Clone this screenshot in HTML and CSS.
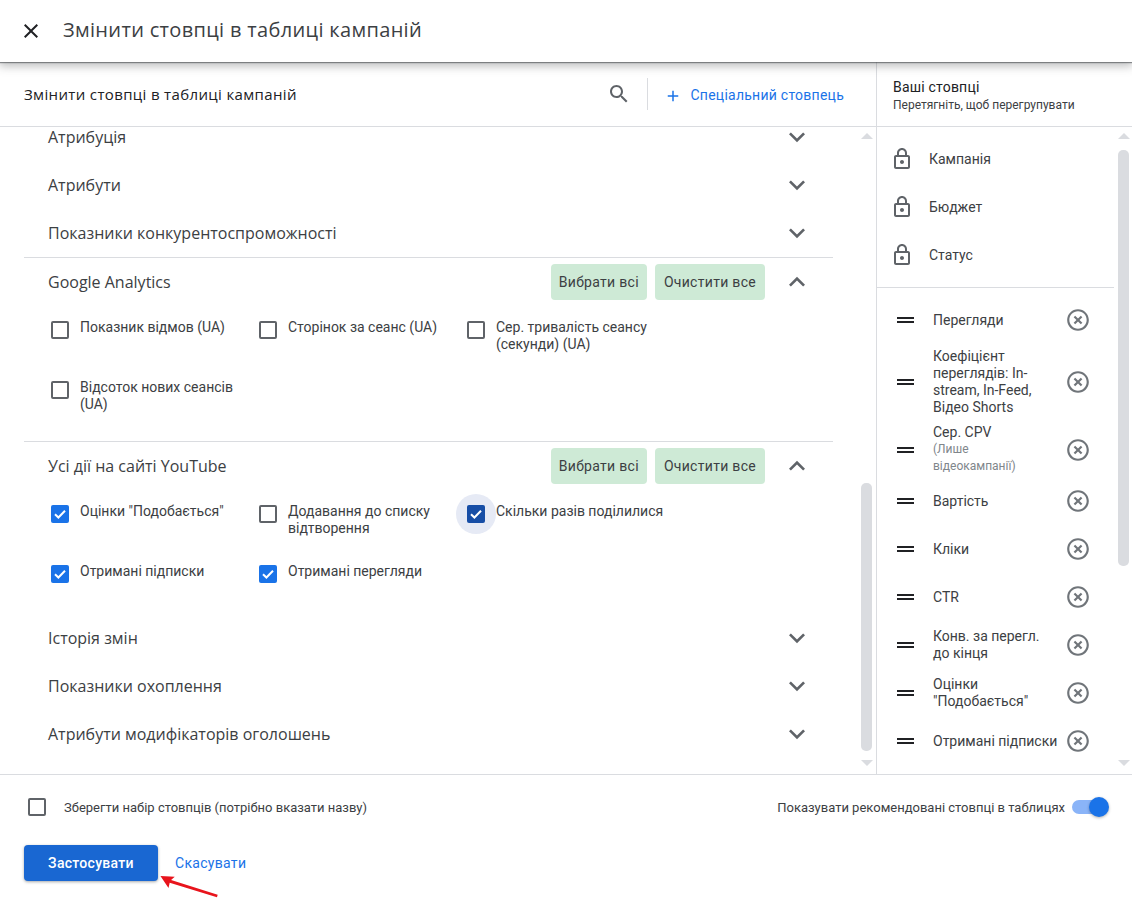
FILE: index.html
```html
<!DOCTYPE html>
<html lang="uk">
<head>
<meta charset="utf-8">
<title>Змінити стовпці в таблиці кампаній</title>
<link rel="stylesheet" href="styles.css">
</head>
<body>
<svg class="defs" width="0" height="0" aria-hidden="true">
  <symbol id="down" viewBox="3 3 18 18"><path d="M16.59 8.59L12 13.17 7.41 8.59 6 10l6 6 6-6z"/></symbol>
  <symbol id="up" viewBox="3 3 18 18"><path d="M12 8l-6 6 1.41 1.41L12 10.83l4.59 4.58L18 14z"/></symbol>
  <symbol id="lock" viewBox="0 0 24 24"><path d="M18 8h-1V6c0-2.76-2.24-5-5-5S7 3.24 7 6v2H6c-1.1 0-2 .9-2 2v10c0 1.1.9 2 2 2h12c1.1 0 2-.9 2-2V10c0-1.1-.9-2-2-2zM9 6c0-1.66 1.34-3 3-3s3 1.34 3 3v2H9V6zm9 14H6V10h12v10zm-6-3c1.1 0 2-.9 2-2s-.9-2-2-2-2 .9-2 2 .9 2 2 2z"/></symbol>
  <symbol id="remove" viewBox="0 0 24 24"><path d="M14.59 8L12 10.59 9.41 8 8 9.41 10.59 12 8 14.59 9.41 16 12 13.41 14.59 16 16 14.59 13.41 12 16 9.41 14.59 8zM12 2C6.47 2 2 6.47 2 12s4.47 10 10 10 10-4.47 10-10S17.53 2 12 2zm0 18c-4.41 0-8-3.59-8-8s3.59-8 8-8 8 3.59 8 8-3.59 8-8 8z"/></symbol>
  <symbol id="check" viewBox="0 0 18 18"><path d="M4 9.2l3.4 3.3L14 5.8" fill="none" stroke="#fff" stroke-width="2"/></symbol>
</svg>

<header class="topbar">
  <svg class="close" viewBox="0 0 24 24"><path d="M19 6.41L17.59 5 12 10.59 6.41 5 5 6.41 10.59 12 5 17.59 6.41 19 12 13.41 17.59 19 19 17.59 13.41 12z"/></svg>
  <h1 class="topbar-title">Змінити стовпці в таблиці кампаній</h1>
</header>

<main class="main">
  <section class="picker">
    <div class="picker-head">
      <h2 class="picker-title">Змінити стовпці в таблиці кампаній</h2>
      <svg class="search" viewBox="0 0 24 24"><path d="M15.5 14h-.79l-.28-.27C15.41 12.59 16 11.11 16 9.5 16 5.91 13.09 3 9.5 3S3 5.91 3 9.5 5.91 16 9.5 16c1.61 0 3.09-.59 4.23-1.57l.27.28v.79l5 4.99L20.49 19l-4.99-5zm-6 0C7.01 14 5 11.99 5 9.5S7.01 5 9.5 5 14 7.01 14 9.5 11.99 14 9.5 14z"/></svg>
      <span class="vline"></span>
      <a class="add-col"><svg class="plus" viewBox="0 0 24 24"><path d="M19 13h-6v6h-2v-6H5v-2h6V5h2v6h6v2z"/></svg>Спеціальний стовпець</a>
    </div>
    <div class="picker-body">
      <div class="groups">
        <div class="group-row"><span class="group-name">Атрибуція</span><svg class="chev"><use href="#down"/></svg></div>
        <div class="group-row"><span class="group-name">Атрибути</span><svg class="chev"><use href="#down"/></svg></div>
        <div class="group-row"><span class="group-name">Показники конкурентоспроможності</span><svg class="chev"><use href="#down"/></svg></div>

        <div class="group-open ga">
          <div class="group-row">
            <span class="group-name">Google Analytics</span>
            <button class="chip">Вибрати всі</button><button class="chip">Очистити все</button>
            <svg class="chev"><use href="#up"/></svg>
          </div>
          <div class="opts">
            <label class="opt"><span class="cb"></span><span>Показник відмов (UA)</span></label>
            <label class="opt"><span class="cb"></span><span>Сторінок за сеанс (UA)</span></label>
            <label class="opt"><span class="cb"></span><span>Сер. тривалість сеансу (секунди) (UA)</span></label>
            <label class="opt"><span class="cb"></span><span>Відсоток нових сеансів (UA)</span></label>
          </div>
        </div>

        <div class="group-open yt">
          <div class="group-row">
            <span class="group-name">Усі дії на сайті YouTube</span>
            <button class="chip">Вибрати всі</button><button class="chip">Очистити все</button>
            <svg class="chev"><use href="#up"/></svg>
          </div>
          <div class="opts">
            <label class="opt"><span class="cb on"><svg><use href="#check"/></svg></span><span>Оцінки "Подобається"</span></label>
            <label class="opt"><span class="cb"></span><span>Додавання до списку відтворення</span></label>
            <label class="opt"><span class="cb on focus"><svg><use href="#check"/></svg></span><span>Скільки разів поділилися</span></label>
            <label class="opt"><span class="cb on"><svg><use href="#check"/></svg></span><span>Отримані підписки</span></label>
            <label class="opt"><span class="cb on"><svg><use href="#check"/></svg></span><span>Отримані перегляди</span></label>
          </div>
        </div>

        <div class="group-row"><span class="group-name">Історія змін</span><svg class="chev"><use href="#down"/></svg></div>
        <div class="group-row"><span class="group-name">Показники охоплення</span><svg class="chev"><use href="#down"/></svg></div>
        <div class="group-row"><span class="group-name">Атрибути модифікаторів оголошень</span><svg class="chev"><use href="#down"/></svg></div>
      </div>
      <div class="scroll scroll-left">
        <i class="arrow-up"></i><i class="thumb"></i><i class="arrow-down"></i>
      </div>
    </div>
  </section>

  <aside class="yours">
    <div class="yours-head">
      <div class="yours-title">Ваші стовпці</div>
      <div class="yours-sub">Перетягніть, щоб перегрупувати</div>
    </div>
    <div class="yours-body">
      <div class="yours-list">
        <div class="locked">
          <div class="lock-row"><svg class="lock"><use href="#lock"/></svg>Кампанія</div>
          <div class="lock-row"><svg class="lock"><use href="#lock"/></svg>Бюджет</div>
          <div class="lock-row"><svg class="lock"><use href="#lock"/></svg>Статус</div>
        </div>
        <div class="drag-list">
          <div class="drag-row"><span class="grip"></span><span class="drag-label">Перегляди</span><svg class="rm"><use href="#remove"/></svg></div>
          <div class="drag-row tall"><span class="grip"></span><span class="drag-label">Коефіцієнт переглядів: In-stream, In-Feed, Відео Shorts</span><svg class="rm"><use href="#remove"/></svg></div>
          <div class="drag-row mid"><span class="grip"></span><span class="drag-label">Сер. CPV<small class="note">(Лише відеокампанії)</small></span><svg class="rm"><use href="#remove"/></svg></div>
          <div class="drag-row"><span class="grip"></span><span class="drag-label">Вартість</span><svg class="rm"><use href="#remove"/></svg></div>
          <div class="drag-row"><span class="grip"></span><span class="drag-label">Кліки</span><svg class="rm"><use href="#remove"/></svg></div>
          <div class="drag-row"><span class="grip"></span><span class="drag-label">CTR</span><svg class="rm"><use href="#remove"/></svg></div>
          <div class="drag-row"><span class="grip"></span><span class="drag-label">Конв. за перегл. до кінця</span><svg class="rm"><use href="#remove"/></svg></div>
          <div class="drag-row"><span class="grip"></span><span class="drag-label">Оцінки "Подобається"</span><svg class="rm"><use href="#remove"/></svg></div>
          <div class="drag-row"><span class="grip"></span><span class="drag-label">Отримані підписки</span><svg class="rm"><use href="#remove"/></svg></div>
        </div>
      </div>
      <div class="scroll scroll-right">
        <i class="arrow-up"></i><i class="thumb"></i><i class="arrow-down"></i>
      </div>
    </div>
  </aside>
</main>

<footer class="footer">
  <div class="footer-top">
    <span class="cb"></span>
    <span class="save-label">Зберегти набір стовпців (потрібно вказати назву)</span>
    <span class="rec-label">Показувати рекомендовані стовпці в таблицях</span>
    <span class="toggle"><i class="knob"></i></span>
  </div>
  <div class="footer-actions">
    <button class="apply">Застосувати</button>
    <a class="cancel">Скасувати</a>
  </div>
  <svg class="red-arrow" viewBox="0 0 64 26"><path d="M0 1l15.500 1 -4 3.500L62 21.500l-.8 2.500L10 8.500l-1.300 5.500z" fill="#e8141c"/></svg>
</footer>
</body>
</html>
```
FILE: styles.css
```css
* { box-sizing: border-box; }
html, body { margin: 0; height: 904px; overflow: hidden; }
body { font: 14px/17px Roboto, "Liberation Sans", sans-serif; color: #3c4043; background: #fff; }
.defs { position: absolute; }
h1, h2 { margin: 0; font-weight: 400; }

.topbar { position: relative; z-index: 2; display: flex; align-items: center; height: 62px; padding-left: 19px; background: #fff; box-shadow: 0 1px 1px rgba(60,64,67,.55), 0 3px 9px 1px rgba(60,64,67,.35); }
.close { width: 24px; height: 24px; fill: #202124; }
.topbar-title { margin: 0 0 2px 20px; font: 400 20px/28px "Open Sans", sans-serif; letter-spacing: .33px; color: #3c4043; }

.main { display: flex; height: 712px; }
.picker { display: flex; flex-direction: column; width: 877px; border-right: 1px solid #dadce0; }
.picker-head { display: flex; align-items: center; height: 65px; padding: 0 32px 0 24px; border-bottom: 1px solid #dadce0; }
.picker-title { flex: 1; font: 500 15px/20px "Open Sans", sans-serif; letter-spacing: .35px; color: #202124; }
.search { width: 24px; height: 24px; fill: #5f6368; }
.vline { width: 1px; height: 32px; margin: 0 16px; background: #dadce0; }
.add-col { display: flex; align-items: center; margin-top: 3px; font-weight: 450; letter-spacing: .25px; color: #1a73e8; }
.plus { width: 18px; height: 18px; margin-right: 8px; fill: #1a73e8; }

.picker-body { flex: 1; min-height: 0; display: flex; overflow: hidden; }
.groups { width: 861px; margin-top: -14px; padding-left: 24px; }
.group-row { display: flex; align-items: center; height: 48px; width: 809px; padding: 0 24px; }
.group-name { flex: 1; font: 500 16px/24px "Open Sans", sans-serif; color: #3c4043; }
.chev { width: 24px; height: 24px; margin-left: 20px; fill: #5f6368; }
.chip { height: 36px; margin-left: 8px; padding: 0 8px; border: 0; border-radius: 4px; background: #ceead6; font: 450 14px/17px Roboto, sans-serif; letter-spacing: .3px; color: #3c4043; }
.chip + .chip { padding: 0 9px; }
.group-open { width: 809px; border-top: 1px solid #dadce0; }
.ga { padding-bottom: 14px; }
.yt { padding-bottom: 3px; }
.opts { display: grid; grid-template-columns: repeat(3, 208px); grid-auto-rows: 48px; row-gap: 12px; padding: 13px 0 0 24px; }
.opt { display: flex; align-items: flex-start; gap: 11px; padding-left: 3px; }
.opt > span:last-child { width: 168px; }
.cb { position: relative; flex: none; width: 18px; height: 18px; margin-top: 2px; border: 2px solid #5f6368; border-radius: 2px; background: #fff; }
.cb svg { position: absolute; left: 0; top: 0; width: 18px; height: 18px; }
.cb.on { border: 0; background: #1a73e8; }
.cb.focus { background: #174ea6; }
.cb.focus::before { content: ""; position: absolute; z-index: -1; left: -11px; top: -11px; width: 40px; height: 40px; border-radius: 50%; background: #e6eaf5; }

.scroll { flex: none; display: flex; flex-direction: column; align-items: center; width: 11px; height: 100%; padding: 6px 0 8px; }
.thumb { width: 11px; border-radius: 5px; background: #dadce0; }
.arrow-up, .arrow-down { width: 0; height: 0; border-left: 6px solid transparent; border-right: 6px solid transparent; }
.arrow-up { border-bottom: 6px solid #dadce0; }
.arrow-down { border-top: 6px solid #dadce0; margin-top: auto; }
.scroll-left .thumb { height: 268px; margin-top: 344px; }
.scroll-right .thumb { height: 416px; margin-top: 11px; }

.yours { flex: 1; min-width: 0; display: flex; flex-direction: column; }
.yours-head { height: 65px; padding: 17px 0 0 16px; border-bottom: 1px solid #dadce0; }
.yours-title { font-size: 14px; line-height: 17px; letter-spacing: .2px; color: #202124; }
.yours-sub { margin-top: 1px; font-size: 12px; line-height: 16px; color: #3c4043; }
.yours-body { flex: 1; min-height: 0; display: flex; }
.yours-list { width: 241px; overflow: hidden; }
.locked { width: 237px; padding: 8px 0; border-bottom: 1px solid #dadce0; }
.lock-row { display: flex; align-items: center; height: 48px; padding-left: 13px; }
.lock { flex: none; width: 24px; height: 24px; margin-right: 15px; fill: #5f6368; }
.drag-list { width: 237px; padding-top: 8px; }
.drag-row { display: flex; align-items: center; min-height: 48px; padding-left: 20px; }
.drag-row.tall { padding-block: 4px; }
.drag-row.mid { padding: 4px 0 2px 20px; }
.grip { flex: none; width: 17px; height: 6px; margin-right: 19px; border-top: 2px solid #202124; border-bottom: 2px solid #202124; }
.drag-label { flex: none; width: 125px; }
.note { display: block; width: 100px; font-size: 12px; color: #80868b; }
.rm { flex: none; width: 26px; height: 26px; margin-left: 7px; fill: #70757a; }

.footer { position: relative; height: 130px; border-top: 1px solid #dadce0; padding: 23px 28px 0 24px; }
.footer-top { display: flex; align-items: center; height: 18px; }
.footer-top .cb { margin: 0 18px 0 4px; }
.save-label { flex: 1; font-size: 13px; }
.rec-label { margin-right: 7px; font-size: 13px; }
.toggle { position: relative; display: block; width: 32px; height: 14px; border-radius: 7px; background: #8ab4f8; }
.knob { position: absolute; right: -5px; top: -3px; width: 20px; height: 20px; border-radius: 50%; background: #1a73e8; box-shadow: 0 1px 3px rgba(0,0,0,.3); }
.footer-actions { display: flex; align-items: center; margin-top: 29px; }
.apply { width: 134px; height: 36px; border: 0; border-radius: 4px; background: #1967d2; box-shadow: 0 1px 3px rgba(60,64,67,.45); font: 500 14px/17px Roboto, sans-serif; letter-spacing: .3px; color: #fff; }
.cancel { margin-left: 17px; font-weight: 450; letter-spacing: .3px; color: #1a73e8; }
.red-arrow { position: absolute; left: 160px; top: 100px; width: 60px; height: 24px; }
```
